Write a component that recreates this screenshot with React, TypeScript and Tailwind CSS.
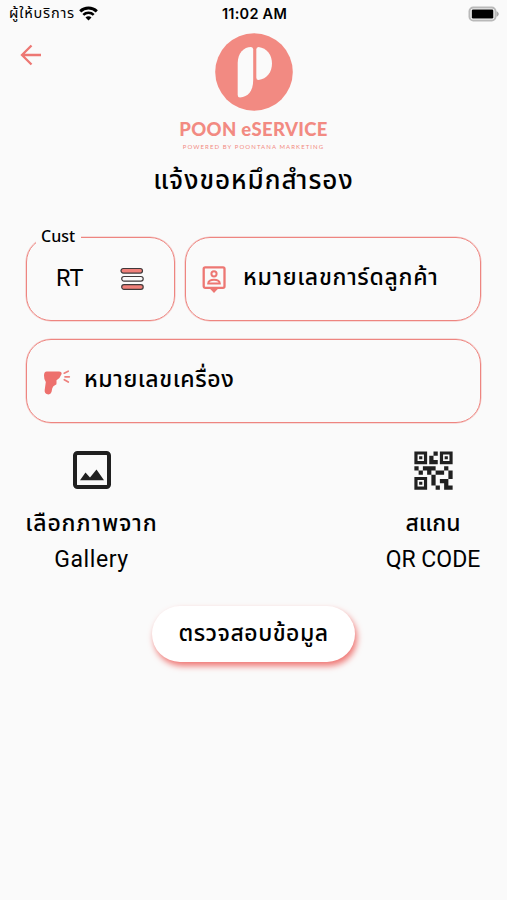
import type { ReactNode } from "react";
import { MdQrCode2 } from "react-icons/md";

const THAI = "font-['Noto_Sans_Thai','Noto_Sans',sans-serif]";

function WifiIcon() {
  return (
    <svg viewBox="0 0 19 15" className="h-[15px] w-[19px]" fill="none" stroke="#000">
      <path d="M1.200 5.400a12 12 0 0 1 16.600 0" strokeWidth="3" />
      <path d="M4.300 8.900a7.500 7.500 0 0 1 10.400 0" strokeWidth="2.600" />
      <path d="M9.500 14.400 6.500 11.500a4 4 0 0 1 6 0z" fill="#000" stroke="none" />
    </svg>
  );
}

function BatteryIcon() {
  return (
    <svg viewBox="0 0 32 16" className="h-4 w-8">
      <rect x="1.500" y="1.500" width="26" height="13" rx="3.800" fill="#fafafa" stroke="#b9b9b9" strokeWidth="2" />
      <rect x="3.800" y="3.500" width="21.500" height="9" rx="1.200" fill="#000" />
      <path d="M28.500 5.300c3 1.200 3 4.200 0 5.400z" fill="#aaa" />
    </svg>
  );
}

function Logo() {
  return (
    <svg viewBox="0 0 78 78" className="h-[78px] w-[78px]">
      <circle cx="39" cy="39" r="38.800" fill="#f28a82" />
      <path d="M22.700 30C22.700 20 29 14 36 14Q38.200 14 38.200 16.500V47C38.200 58 33 64 25 64.500Q22.700 64.500 22.700 62Z" fill="#fafafa" />
      <path d="M41.300 16.500Q41.300 14 43.500 14C52 15 57 22 57 30.500S52 46 43.500 47Q41.300 47 41.300 44.500Z" fill="#fafafa" />
    </svg>
  );
}

function MenuIcon() {
  return (
    <svg viewBox="0 0 24 24" className="h-6 w-6" stroke="#40393a" strokeWidth="1.200">
      <rect x="1" y="1.500" width="21.500" height="4.600" rx="2.300" fill="#f0807a" />
      <rect x="1.700" y="9.500" width="21.500" height="4.600" rx="2.300" fill="#fafafa" />
      <rect x="1.700" y="17.700" width="21.500" height="4.600" rx="2.300" fill="#f0807a" />
    </svg>
  );
}

function CardIcon() {
  return (
    <svg viewBox="0 0 24 28" className="h-7 w-6" fill="none" stroke="#ed7773" strokeWidth="2.300">
      <rect x="1.700" y="2.300" width="20.800" height="20.500" rx="1.500" />
      <path d="M7.500 23.300h9L12 28z" fill="#ed7773" stroke="none" />
      <circle cx="12" cy="8.800" r="2.600" strokeWidth="2" />
      <path d="M6.200 18.500c0-5 11.600-5 11.600 0z" strokeWidth="2" />
    </svg>
  );
}

function ScannerIcon() {
  return (
    <svg viewBox="0 0 28 26" className="mt-[3px] h-[26px] w-7">
      <path
        d="M4.500 1.500H16q3 0 2.600 2.500Q17.300 8 13.500 10.200v3q.2 1.300-1.200 1.900-2.300.8-3 3.200L8.500 22Q7.500 25 4.500 24.300 1.200 23.500 1.700 20L2.800 12Q1 10 1 5.500T4.500 1.500Z"
        fill="#ed706d"
      />
      <path d="m21.200 3.200 4-2M22 6.800h4.300M21.300 9.700l4 2.300" stroke="#ed807c" strokeWidth="1.700" strokeLinecap="round" />
    </svg>
  );
}

function GalleryIcon() {
  return (
    <svg viewBox="0 0 38 38" className="h-[38px] w-[38px]">
      <rect x="2" y="2" width="34" height="34" rx="2.500" fill="none" stroke="#202020" strokeWidth="4" />
      <path d="m7 29.300 5.500-7.800 4.500 5 6.500-8L31 29.300z" fill="#202020" />
    </svg>
  );
}

interface FieldProps {
  icon: ReactNode;
  children: ReactNode;
  className?: string;
}

function Field({ icon, children, className }: FieldProps) {
  return (
    <div
      className={`flex h-[84px] items-center rounded-[25px] border border-[#ee8580] pl-4 shadow-[0_0_0_0.5px_#ee858080] ${className ?? ""}`}
    >
      {icon}
      {children}
    </div>
  );
}

export default function App() {
  return (
    <div className={`flex h-[900px] w-[507px] flex-col overflow-hidden bg-[#fafafa] text-black ${THAI}`}>
      {/* status bar */}
      <header className="grid h-[27px] grid-cols-3 items-center pr-[7px] pl-[9px]">
        <div className="flex items-center gap-1">
          <span className="pt-0.5 text-[14.5px] tracking-[0.8px] whitespace-nowrap">ผู้ให้บริการ</span>
          <WifiIcon />
        </div>
        <span className="text-center font-['Inter',sans-serif] text-[14.5px] font-semibold tracking-[0.25px]">11:02 AM</span>
        <div className="flex justify-end">
          <BatteryIcon />
        </div>
      </header>

      <div className="grid grid-cols-[1fr_160px_1fr] pt-[6px]">
        <button className="mt-[11px] ml-5 h-[22px] w-[22px]" aria-label="Back">
          <svg viewBox="0 0 22 22" fill="none" stroke="#ed7773" strokeWidth="2.300">
            <path d="M21 11H2.500M11.500 1.500 2 11 11.500 20.500" />
          </svg>
        </button>
        <div className="flex flex-col items-center">
          <Logo />
          <div className="mt-[7px] font-['Lato',sans-serif] text-[18.5px] leading-[22px] font-black tracking-[0.35px] whitespace-nowrap text-[#f28a82]">
            POON eSERVICE
          </div>
          <div className="mt-[3px] font-['Lato',sans-serif] text-[6px] leading-2 tracking-[1.08px] whitespace-nowrap text-[#f28a82]">
            POWERED BY POONTANA MARKETING
          </div>
        </div>
      </div>

      <h1 className="mt-[11px] text-center text-[26px] leading-[38px] font-medium tracking-[1px]">แจ้งขอหมึกสำรอง</h1>

      <main className="flex flex-col px-[26px] pt-[37px]">
        <div className="flex gap-[10px]">
          <div className="relative flex h-[84px] w-[149px] shrink-0 items-center rounded-[25px] border border-[#ee8580] shadow-[0_0_0_0.5px_#ee858080]">
            <span className="absolute -top-[11px] left-[9px] bg-[#fafafa] pr-1.5 pl-[5px] text-[16px] leading-5 font-medium">
              Cust
            </span>
            <span className="ml-[29px] w-[64px] font-['Roboto',sans-serif] text-[23.5px]">RT</span>
            <MenuIcon />
          </div>
          <Field icon={<CardIcon />} className="flex-1">
            <span className="ml-[17px] pb-[2px] text-[23px] font-medium tracking-[0.7px] whitespace-nowrap">
              หมายเลขการ์ดลูกค้า
            </span>
          </Field>
        </div>

        <Field icon={<ScannerIcon />} className="mt-[18px]">
          <span className="ml-[13px] pb-[2px] text-[23px] font-medium tracking-[0.6px] whitespace-nowrap">หมายเลขเครื่อง</span>
        </Field>

        <div className="mt-7 flex justify-between text-[23px] leading-9 font-medium">
          <button className="flex w-[131px] flex-col items-center">
            <GalleryIcon />
            <span className="mt-[17px] tracking-[0.9px] whitespace-nowrap">เลือกภาพจาก</span>
            <span className="font-['Roboto',sans-serif] font-normal tracking-[0.6px]">Gallery</span>
          </button>
          <button className="flex w-[96px] flex-col items-center">
            <MdQrCode2 className="-my-[6.5px] h-[51px] w-[51px] text-[#202020]" />
            <span className="mt-[17px] whitespace-nowrap">สแกน</span>
            <span className="font-['Roboto',sans-serif] font-normal whitespace-nowrap">QR CODE</span>
          </button>
        </div>

        <button className="mt-[28px] h-[56px] w-[203px] self-center rounded-full bg-white text-[23px] font-medium tracking-[0.5px] whitespace-nowrap shadow-[2px_4px_6px_#ef7774]">
          ตรวจสอบข้อมูล
        </button>
      </main>
    </div>
  );
}
